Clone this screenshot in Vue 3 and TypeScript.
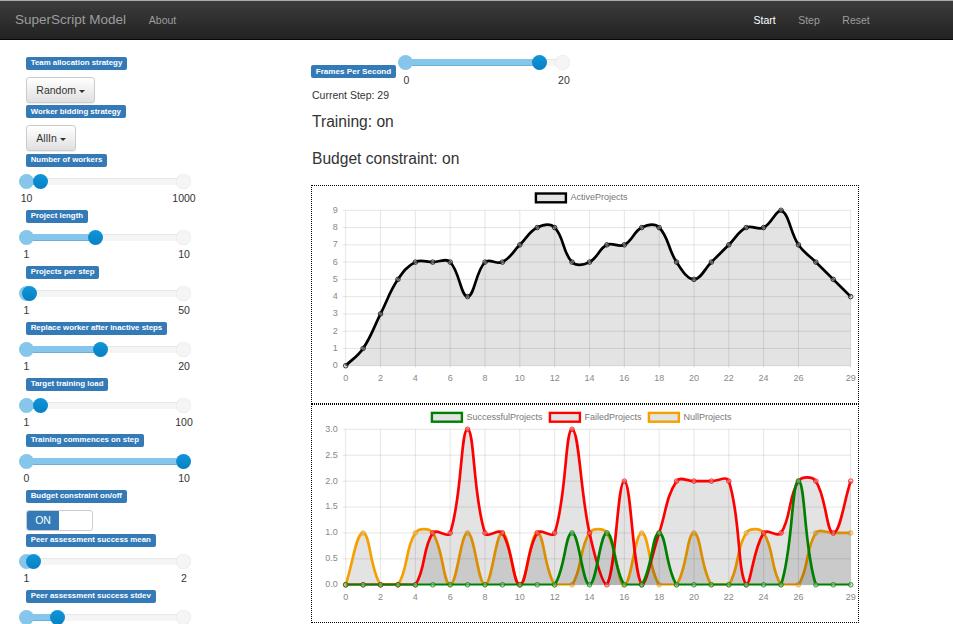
<script setup lang="ts">
/** SuperScript model dashboard: controls on the left, live charts on the right. */

interface Control {
  kind: "select" | "slider" | "switch";
  label: string;
  text?: string;
  min?: number;
  max?: number;
  value?: number;
  belowFold?: boolean; // end numbers fall past the window, so they are left out
}

interface Series {
  name: string;
  color: string;
  data: number[];
  legendX: number;
}

const controls: Control[] = [
  { kind: "select", label: "Team allocation strategy", text: "Random" },
  { kind: "select", label: "Worker bidding strategy", text: "AllIn" },
  { kind: "slider", label: "Number of workers", min: 10, max: 1000, value: 100 },
  { kind: "slider", label: "Project length", min: 1, max: 10, value: 5 },
  { kind: "slider", label: "Projects per step", min: 1, max: 50, value: 2 },
  { kind: "slider", label: "Replace worker after inactive steps", min: 1, max: 20, value: 10 },
  { kind: "slider", label: "Target training load", min: 1, max: 100, value: 10 },
  { kind: "slider", label: "Training commences on step", min: 0, max: 10, value: 10 },
  { kind: "switch", label: "Budget constraint on/off" },
  { kind: "slider", label: "Peer assessment success mean", min: 1, max: 2, value: 1.05 },
  { kind: "slider", label: "Peer assessment success stdev", min: 0, max: 1, value: 0.2, belowFold: true },
];

function pct(c: { min?: number; max?: number; value?: number }) {
  const min = c.min ?? 0;
  const max = c.max ?? 1;
  return (((c.value ?? 0) - min) / (max - min)) * 100 + "%";
}

// chart geometry, in px inside the dotted box
const W = 546;
const H = 217;
const LEFT = 33.7;
const RIGHT = 538.7;

const xTicks = [0, 2, 4, 6, 8, 10, 12, 14, 16, 18, 20, 22, 24, 26, 29];

function xAt(i: number) {
  return LEFT + ((RIGHT - LEFT) * i) / 29;
}

type Pt = { x: number; y: number };

// same bezier control points as chart.js' splineCurve with tension 0.4
function linePath(pts: Pt[], top: number, bottom: number) {
  const t = 0.4;
  const cap = (v: number, lo: number, hi: number) => Math.max(Math.min(v, hi), lo);
  const ctrl = pts.map((cur, i) => {
    const prev = pts[i - 1] ?? cur;
    const next = pts[i + 1] ?? cur;
    const d01 = Math.hypot(cur.x - prev.x, cur.y - prev.y);
    const d12 = Math.hypot(next.x - cur.x, next.y - cur.y);
    const sum = d01 + d12 || 1;
    const fa = (t * d01) / sum;
    const fb = (t * d12) / sum;
    return {
      px: cap(cur.x - fa * (next.x - prev.x), LEFT, RIGHT),
      py: cap(cur.y - fa * (next.y - prev.y), top, bottom),
      nx: cap(cur.x + fb * (next.x - prev.x), LEFT, RIGHT),
      ny: cap(cur.y + fb * (next.y - prev.y), top, bottom),
    };
  });
  let d = `M${pts[0].x} ${pts[0].y}`;
  for (let i = 1; i < pts.length; i++) {
    const a = ctrl[i - 1];
    const b = ctrl[i];
    d += `C${a.nx} ${a.ny} ${b.px} ${b.py} ${pts[i].x} ${pts[i].y}`;
  }
  return d;
}

function buildChart(
  id: string,
  top: number,
  bottom: number,
  yMax: number,
  yStep: number,
  yDigits: number,
  legendY: number,
  series: Series[],
) {
  const yAt = (v: number) => bottom - ((bottom - top) * v) / yMax;
  const yTicks: { y: number; label: string }[] = [];
  for (let v = 0; v <= yMax + 1e-6; v += yStep) {
    yTicks.push({ y: yAt(v), label: v.toFixed(yDigits) });
  }
  // first dataset is painted last, like chart.js does
  const drawn = [...series].reverse().map((s) => {
    const pts = s.data.map((v, i) => ({ x: xAt(i), y: yAt(v) }));
    const line = linePath(pts, top, bottom);
    return {
      ...s,
      pts,
      line,
      fill: `${line}L${RIGHT} ${bottom}L${LEFT} ${bottom}Z`,
    };
  });
  return { id, top, bottom, yTicks, legendY, series, drawn };
}

const charts = [
  buildChart("clip-active", 24.3, 179.7, 9, 1, 0, 6.3, [
    {
      name: "ActiveProjects",
      color: "#000",
      legendX: 223.5,
      data: [0, 1, 3, 5, 6, 6, 6, 4, 6, 6, 7, 8, 8, 6, 6, 7, 7, 8, 8, 6, 5, 6, 7, 8, 8, 9, 7, 6, 5, 4],
    },
  ]),
  buildChart("clip-outcomes", 24.3, 179.8, 3, 0.5, 1, 6.7, [
    {
      name: "SuccessfulProjects",
      color: "#008000",
      legendX: 119.5,
      data: [0, 0, 0, 0, 0, 0, 0, 0, 0, 0, 0, 0, 0, 1, 0, 1, 0, 0, 1, 0, 0, 0, 0, 0, 0, 0, 2, 0, 0, 0],
    },
    {
      name: "FailedProjects",
      color: "#ff0000",
      legendX: 237.5,
      data: [0, 0, 0, 0, 0, 1, 1, 3, 1, 1, 0, 1, 1, 3, 1, 0, 2, 0, 1, 2, 2, 2, 2, 0, 1, 1, 2, 2, 1, 2],
    },
    {
      name: "NullProjects",
      color: "#f5a000",
      legendX: 336.5,
      data: [0, 1, 0, 0, 1, 1, 0, 1, 0, 1, 0, 1, 0, 0, 1, 1, 0, 1, 0, 0, 1, 0, 0, 1, 1, 0, 0, 1, 1, 1],
    },
  ]),
];
</script>

<template>
  <div class="page">
    <nav class="navbar">
      <a class="brand">SuperScript Model</a>
      <a class="nav-link about">About</a>
      <span class="spacer"></span>
      <a class="nav-link active">Start</a>
      <a class="nav-link">Step</a>
      <a class="nav-link">Reset</a>
    </nav>

    <div class="content">
      <aside class="sidebar">
        <div v-for="c in controls" :key="c.label" :class="['control', c.kind]">
          <span class="label">{{ c.label }}</span>
          <button v-if="c.kind === 'select'" class="dropdown" type="button">
            {{ c.text }} <span class="caret"></span>
          </button>
          <div v-else-if="c.kind === 'switch'" class="toggle">
            <span class="toggle-on">ON</span>
          </div>
          <div v-else class="slider">
            <div class="track">
              <div class="range" :style="{ width: pct(c) }"></div>
              <span class="knob knob-min"></span>
              <span class="knob knob-max"></span>
              <span class="knob knob-value" :style="{ left: pct(c) }"></span>
            </div>
            <div v-if="!c.belowFold" class="ends">
              <span>{{ c.min }}</span>
              <span>{{ c.max }}</span>
            </div>
          </div>
        </div>
      </aside>

      <main class="main">
        <div class="fps-row">
          <span class="label">Frames Per Second</span>
          <div class="slider">
            <div class="track">
              <div class="range" :style="{ width: '85%' }"></div>
              <span class="knob knob-min"></span>
              <span class="knob knob-max"></span>
              <span class="knob knob-value" :style="{ left: '85%' }"></span>
            </div>
            <div class="ends">
              <span>0</span>
              <span>20</span>
            </div>
          </div>
        </div>
        <p class="step">Current Step: 29</p>
        <h4 class="status">Training: on</h4>
        <h4 class="status">Budget constraint: on</h4>

        <div class="charts">
          <div v-for="ch in charts" :key="ch.id" class="chart-box">
            <svg :width="W" :height="H" :viewBox="`0 0 ${W} ${H}`">
              <defs>
                <clipPath :id="ch.id">
                  <rect x="25" :y="ch.top - 4" width="520" :height="ch.bottom - ch.top + 4.6" />
                </clipPath>
              </defs>

              <g v-for="s in ch.series" :key="s.name">
                <rect
                  :x="s.legendX + 0.4"
                  :y="ch.legendY + 1.2"
                  width="30"
                  height="8.8"
                  :stroke="s.color"
                  stroke-width="2.4"
                  fill="#e3e3e3"
                />
                <text :x="s.legendX + 35" :y="ch.legendY + 8" class="legend-text">{{ s.name }}</text>
              </g>

              <g class="grid">
                <line
                  v-for="t in ch.yTicks"
                  :key="t.label"
                  :x1="LEFT - 3"
                  :x2="RIGHT"
                  :y1="t.y"
                  :y2="t.y"
                />
                <line
                  v-for="i in xTicks"
                  :key="i"
                  :x1="xAt(i)"
                  :x2="xAt(i)"
                  :y1="ch.top"
                  :y2="ch.bottom + 2"
                />
              </g>
              <text
                v-for="t in ch.yTicks"
                :key="'y' + t.label"
                :x="LEFT - 8"
                :y="t.y + 2.4"
                text-anchor="end"
                class="tick"
              >{{ t.label }}</text>
              <text
                v-for="i in xTicks"
                :key="'x' + i"
                :x="xAt(i)"
                :y="ch.bottom + 14.8"
                text-anchor="middle"
                class="tick"
              >{{ i }}</text>

              <g v-for="s in ch.drawn" :key="s.name">
                <path :d="s.fill" fill="rgba(0,0,0,0.11)" />
                <path
                  :d="s.line"
                  fill="none"
                  :stroke="s.color"
                  stroke-width="2.7"
                  :clip-path="`url(#${ch.id})`"
                />
                <circle
                  v-for="(p, i) in s.pts"
                  :key="i"
                  :cx="p.x"
                  :cy="p.y"
                  r="2.3"
                  fill="rgba(200,200,200,0.45)"
                  :stroke="s.color"
                  stroke-opacity="0.75"
                  stroke-width="1"
                />
              </g>
            </svg>
          </div>
        </div>
      </main>
    </div>
  </div>
</template>

<style scoped>
.page {
  font-family: "Liberation Sans", Arial, sans-serif;
  font-size: 10.5px;
  color: #333;
  height: 624px;
  overflow: hidden;
}

.navbar {
  display: flex;
  align-items: center;
  box-sizing: border-box;
  height: 40px;
  padding: 0 72px 1px 15px;
  background: linear-gradient(to bottom, #3c3c3c 0, #222 100%);
  border-top: 1px solid #aaa;
  border-bottom: 1px solid #080808;
}
.brand {
  font-size: 13.5px;
  color: #9d9d9d;
  margin-right: 11.5px;
}
.nav-link {
  color: #9d9d9d;
  padding: 0 11.25px;
}
.nav-link.active {
  color: #fff;
}
.spacer {
  flex: 1;
}

.content {
  display: flex;
}
.sidebar {
  width: 311px;
  flex: none;
  box-sizing: border-box;
  padding: 16.9px 0 0 26px;
}
.control {
  display: flex;
  flex-direction: column;
  align-items: flex-start;
}
.control.select {
  height: 48.4px;
}
.control.slider {
  height: 56px;
}
.control.switch {
  height: 44px;
}

.label {
  display: block;
  width: fit-content;
  flex: none;
  background: #337ab7;
  color: #fff;
  font-weight: 700;
  font-size: 7.875px;
  line-height: 1;
  padding: 2.5px 4.7px;
  border-radius: 2px;
  white-space: nowrap;
  margin-bottom: 7.3px;
}

.dropdown {
  height: 26px;
  padding: 0 9.3px;
  font: inherit;
  color: #333;
  background: linear-gradient(to bottom, #fff 0, #e0e0e0 100%);
  border: 1px solid #ccc;
  border-radius: 3px;
  box-shadow: inset 0 1px 0 rgba(255, 255, 255, 0.15), 0 1px 1px rgba(0, 0, 0, 0.075);
}
.caret {
  display: inline-block;
  width: 0;
  height: 0;
  vertical-align: middle;
  border-top: 3px solid #333;
  border-left: 3px solid transparent;
  border-right: 3px solid transparent;
}

.toggle {
  width: 67px;
  height: 21px;
  box-sizing: border-box;
  border: 1px solid #ccc;
  border-radius: 3px;
  overflow: hidden;
}
.toggle-on {
  display: block;
  width: 32px;
  height: 100%;
  background: #337ab7;
  color: #fff;
  line-height: 19px;
  text-align: center;
}

.slider {
  width: 157px;
}
.track {
  position: relative;
  height: 7px;
  margin: 4px 0;
  background: #f5f5f5;
  box-shadow: inset 0 1px 1px rgba(0, 0, 0, 0.06);
}
.range {
  height: 100%;
  background: #85c6ea;
  box-shadow: inset 0 -1px 0 rgba(0, 90, 150, 0.2);
}
.knob {
  position: absolute;
  top: -4px;
  width: 15px;
  height: 15px;
  margin-left: -7.5px;
  border-radius: 50%;
}
.knob-min {
  left: 0;
  background: #85c6ea;
}
.knob-max {
  left: 100%;
  background: #f5f5f5;
  box-shadow: inset 0 0 1px rgba(0, 0, 0, 0.15);
}
.knob-value {
  background: linear-gradient(to bottom, #0f96da, #0780c2);
}
.ends {
  display: flex;
  justify-content: space-between;
  margin: 7.5px -8.5px 0 -7px;
  line-height: 13px;
}
.ends span {
  display: flex;
  justify-content: center;
  width: 15px;
  white-space: nowrap;
}

.main {
  flex: 1;
  min-width: 0;
}
.fps-row {
  display: flex;
  padding-top: 15.5px;
  align-items: flex-start;
}
.fps-row .label {
  margin: 9.5px 0 0;
  font-size: 8.1px;
}
.fps-row .slider {
  margin-left: 10px;
}
.fps-row .track {
  margin-top: 3px;
}
.fps-row .ends {
  margin-top: 8px;
}
.step {
  margin: 2px 0 0 1px;
  line-height: 13px;
}
.status {
  font-weight: 400;
  font-size: 15.6px;
  line-height: 18px;
  margin: 11.5px 0 0 1px;
  color: #333;
}
.status + .status {
  margin-top: 19px;
}

.charts {
  margin-top: 17px;
}
.chart-box {
  box-sizing: border-box;
  width: 548px;
  height: 219px;
  border: 1px dotted #000;
}
.chart-box svg {
  display: block;
}
.grid line {
  stroke: rgba(0, 0, 0, 0.1);
  stroke-width: 1;
}
.tick {
  font-size: 9px;
  fill: #888;
}
.legend-text {
  font-size: 9px;
  fill: #777;
}
</style>

<style>
html,
body {
  margin: 0;
  overflow: hidden;
  background: #fff;
}
</style>
